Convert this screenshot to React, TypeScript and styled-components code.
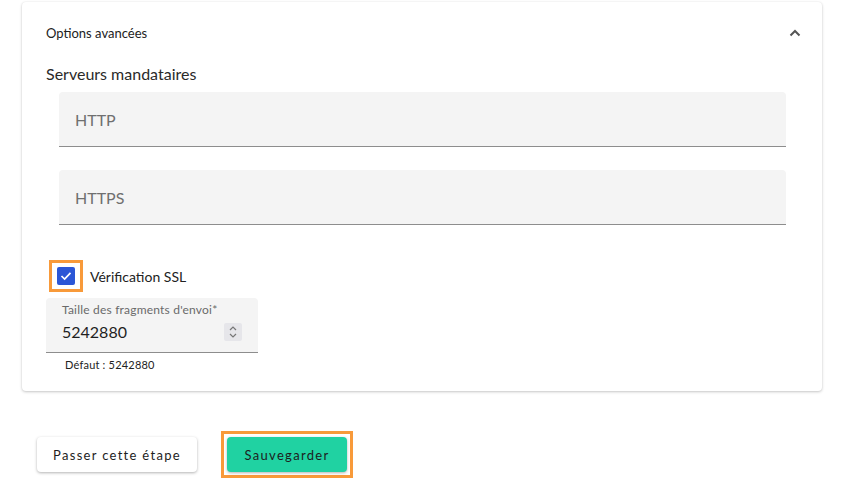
import React, { useState } from 'react'
import styled, { createGlobalStyle } from 'styled-components'

const GlobalStyle = createGlobalStyle`
  html, body {
    margin: 0;
    padding: 0;
    background: #ffffff;
    font-family: Lato, "Noto Sans", sans-serif;
    color: #222;
  }
`

const Page = styled.div`
  padding: 2px 27px 0 22px;
`

const Card = styled.section`
  background: #fff;
  border-radius: 4px;
  box-shadow: 0 1px 3px rgba(0, 0, 0, 0.22), 0 0 2px rgba(0, 0, 0, 0.06);
  padding: 20px 24px 20px 24px;
`

const Header = styled.div`
  display: flex;
  align-items: center;
  justify-content: space-between;
  height: 22px;
  font-size: 13px;
  color: #222;
  margin-right: -3px;
`

const SectionTitle = styled.h3`
  margin: 19px 0 7px 0;
  font-size: 16px;
  font-weight: 400;
  line-height: 22px;
  color: #2a2a2a;
`

const Fields = styled.div`
  display: flex;
  flex-direction: column;
  gap: 23px;
  padding: 0 12px 0 13px;
`

const TextField = styled.div`
  height: 54px;
  background: #f4f4f4;
  border-radius: 4px 4px 0 0;
  border-bottom: 1px solid #8d8d8d;
  display: flex;
  align-items: center;
  padding: 0 16px;
  font-size: 16px;
  color: #6f6f6f;
`

const CheckRow = styled.label`
  display: flex;
  align-items: center;
  gap: 7px;
  margin: 35px 0 6px 3px;
  font-size: 14px;
  color: #222;
`

const FocusRing = styled.span`
  display: inline-flex;
  padding: 4px 5px;
  border: 3px solid #f89a3a;
`

const Box = styled.span<{ $checked: boolean }>`
  width: 18px;
  height: 18px;
  border-radius: 2px;
  background: ${p => (p.$checked ? '#2b56d6' : '#fff')};
  display: flex;
  align-items: center;
  justify-content: center;
`

const NumberField = styled.div`
  width: 212px;
  height: 55px;
  box-sizing: border-box;
  background: #f4f4f4;
  border-radius: 4px 4px 0 0;
  border-bottom: 1px solid #8d8d8d;
  padding: 5px 16px 0 16px;
`

const FieldLabel = styled.div`
  font-size: 12px;
  color: #6a6a6a;
  line-height: 14px;
  letter-spacing: 0.2px;
`

const ValueRow = styled.div`
  display: flex;
  align-items: center;
  justify-content: space-between;
  margin-top: 5px;
  font-size: 16px;
  color: #1f1f1f;
`

const Spinner = styled.span`
  width: 18px;
  height: 18px;
  background: #e6e6ea;
  border-radius: 2px;
  display: flex;
  align-items: center;
  justify-content: center;
`

const Helper = styled.div`
  font-size: 11px;
  color: #222;
  padding-left: 19px;
  margin-top: 5px;
  letter-spacing: 0.2px;
`

const Actions = styled.div`
  display: flex;
  align-items: center;
  gap: 24px;
  padding: 40px 0 0 15px;
`

const FocusFrame = styled.span`
  display: inline-flex;
  padding: 3px;
  border: 3px solid #f89a3a;
`

const Button = styled.button<{ $primary?: boolean }>`
  height: 35px;
  min-width: ${p => (p.$primary ? '120px' : '160px')};
  border: none;
  border-radius: 4px;
  padding: 0 16px;
  font-family: Lato, "Noto Sans", sans-serif;
  font-size: 13px;
  letter-spacing: 1.3px;
  color: #1d1d1d;
  background: ${p => (p.$primary ? '#20d2a2' : '#ffffff')};
  box-shadow: 0 1px 3px rgba(0, 0, 0, 0.3);
  cursor: pointer;
`

const Chevron = () => (
  <svg width="12" height="8" viewBox="0 0 12 8">
    <polyline points="1.5,6.5 6,2 10.5,6.5" fill="none" stroke="#555" strokeWidth="2" />
  </svg>
)

const Check = () => (
  <svg width="12" height="10" viewBox="0 0 12 10">
    <polyline points="1.5,5 4.6,8 10.5,1.8" fill="none" stroke="#fff" strokeWidth="1.7" />
  </svg>
)

const Spin = () => (
  <svg width="10" height="14" viewBox="0 0 10 14">
    <polyline points="2,5 5,2 8,5" fill="none" stroke="#777" strokeWidth="1.2" />
    <polyline points="2,9 5,12 8,9" fill="none" stroke="#777" strokeWidth="1.2" />
  </svg>
)

export default function App() {
  const [ssl, setSsl] = useState(true)
  return (
    <>
      <GlobalStyle />
      <Page>
        <Card>
          <Header>
            <span>Options avancées</span>
            <Chevron />
          </Header>
          <SectionTitle>Serveurs mandataires</SectionTitle>
          <Fields>
            <TextField>HTTP</TextField>
            <TextField>HTTPS</TextField>
          </Fields>
          <CheckRow onClick={() => setSsl(v => !v)}>
            <FocusRing>
              <Box $checked={ssl}>{ssl && <Check />}</Box>
            </FocusRing>
            Vérification SSL
          </CheckRow>
          <NumberField>
            <FieldLabel>Taille des fragments d'envoi*</FieldLabel>
            <ValueRow>
              5242880
              <Spinner>
                <Spin />
              </Spinner>
            </ValueRow>
          </NumberField>
          <Helper>Défaut : 5242880</Helper>
        </Card>
        <Actions>
          <Button>Passer cette étape</Button>
          <FocusFrame>
            <Button $primary>Sauvegarder</Button>
          </FocusFrame>
        </Actions>
      </Page>
    </>
  )
}
